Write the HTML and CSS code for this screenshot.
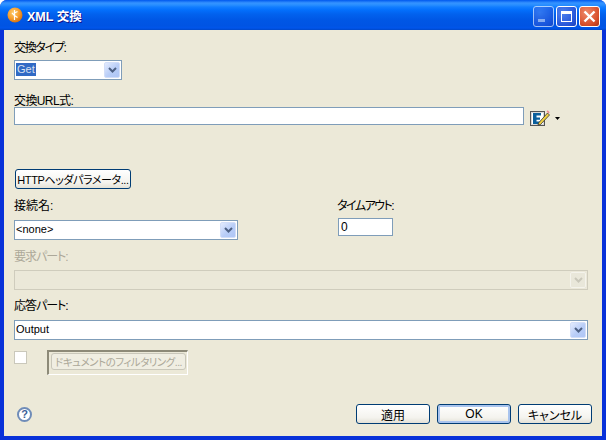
FILE: index.html
```html
<!DOCTYPE html>
<html lang="ja">
<head>
<meta charset="utf-8">
<title>XML 交換</title>
<link rel="stylesheet" href="styles.css">
</head>
<body>
<div class="window">
  <div class="titlebar">
    <svg class="app-icon" width="16" height="16" viewBox="0 0 16 16">
      <defs><radialGradient id="g" cx="0.4" cy="0.35" r="0.7"><stop offset="0" stop-color="#ffd070"/><stop offset="0.6" stop-color="#f59a28"/><stop offset="1" stop-color="#d06c10"/></radialGradient></defs>
      <circle cx="8" cy="8" r="7.500" fill="url(#g)"/>
      <path d="M7.500 3v10M7.500 6l3-1.500M7.500 8.500l3 2M5 6l2.500 2.500" stroke="#fff" stroke-width="1.200" fill="none"/>
    </svg>
    <span class="title">XML 交換</span>
    <div class="controls">
      <div class="ctl ctl-min"><span class="min-glyph"></span></div>
      <div class="ctl ctl-max"><span class="max-glyph"></span></div>
      <div class="ctl ctl-close">
        <svg width="13" height="13" viewBox="0 0 13 13"><path d="M1.500 1.500l10 10M11.500 1.500l-10 10" stroke="#fff" stroke-width="2.400" fill="none"/></svg>
      </div>
    </div>
  </div>
  <div class="body">
    <div class="label tight-more">交換タイプ:</div>
    <div class="combo combo-type">
      <div class="combo-text"><span class="selected">Get</span></div>
      <div class="arrow"><svg width="9" height="7" viewBox="0 0 9 7"><path d="M1 1l3.500 3.500L8 1" stroke="#4d6185" stroke-width="2" fill="none"/></svg></div>
    </div>
    <div class="label l-url tight-less">交換URL式:</div>
    <div class="url-row">
      <input class="field url-field" type="text" value="">
      <svg class="edit-icon" width="20" height="18" viewBox="0 0 20 18">
        <rect x="0.500" y="3.500" width="14" height="14" fill="#d8d8d8" stroke="#555"/>
        <rect x="2" y="5" width="11" height="11" fill="#fff"/>
        <path d="M3 5h8v2.500H6.500v2h3.500v2.200H6.500v1.800H11V16H3z" fill="#0a5f9c"/>
        <path d="M8.500 15l9-10 2 2-9 9.500-2.500 .5z" fill="#f0d040" stroke="#333" stroke-width="0.800"/>
        <path d="M16.500 3.500l1.200-1.300 2 2-1.200 1.300z" fill="#f08a90"/>
      </svg>
      <svg class="drop" width="5" height="3" viewBox="0 0 5 3"><path d="M0 0h5L2.500 3z" fill="#000"/></svg>
    </div>
    <button class="btn btn-http" type="button">HTTPヘッダパラメータ...</button>
    <div class="two-col">
      <div class="col-left">
        <div class="label">接続名:</div>
        <div class="combo combo-conn">
          <div class="combo-text">&lt;none&gt;</div>
          <div class="arrow"><svg width="9" height="7" viewBox="0 0 9 7"><path d="M1 1l3.500 3.500L8 1" stroke="#4d6185" stroke-width="2" fill="none"/></svg></div>
        </div>
      </div>
      <div class="col-right">
        <div class="label label-timeout">タイムアウト:</div>
        <input class="field timeout-field" type="text" value="0">
      </div>
    </div>
    <div class="label label-disabled l-req tight">要求パート:</div>
    <div class="combo combo-disabled">
      <div class="combo-text"></div>
      <div class="arrow arrow-disabled"><svg width="9" height="7" viewBox="0 0 9 7"><path d="M1 1l3.500 3.500L8 1" stroke="#c9c7ba" stroke-width="2" fill="none"/></svg></div>
    </div>
    <div class="label l-res tight">応答パート:</div>
    <div class="combo combo-res">
      <div class="combo-text">Output</div>
      <div class="arrow"><svg width="9" height="7" viewBox="0 0 9 7"><path d="M1 1l3.500 3.500L8 1" stroke="#4d6185" stroke-width="2" fill="none"/></svg></div>
    </div>
    <div class="filter-row">
      <span class="check"></span>
      <div class="filter-frame"><button class="btn-disabled" type="button">ドキュメントのフィルタリング...</button></div>
    </div>
    <div class="footer">
      <span class="help">?</span>
      <div class="actions">
        <button class="btn btn-action" type="button">適用</button>
        <button class="btn btn-action btn-default" type="button">OK</button>
        <button class="btn btn-action" type="button">キャンセル</button>
      </div>
    </div>
  </div>
</div>
</body>
</html>
```

FILE: styles.css
```css
* { box-sizing: border-box; }
html, body { margin: 0; padding: 0; background: #fff; }
body {
  width: 606px;
  height: 440px;
  overflow: hidden;
  font-family: "Liberation Sans", "Noto Sans CJK JP", sans-serif;
  font-size: 12px;
  font-feature-settings: "palt";
  color: #000;
}
.window {
  width: 606px;
  height: 440px;
  display: flex;
  flex-direction: column;
  border-radius: 7px 7px 0 0;
  overflow: hidden;
  background: #0831d9;
}
.titlebar {
  height: 30px;
  flex: none;
  display: flex;
  align-items: center;
  padding: 0 6px 0 7px;
  background: linear-gradient(#0058ee 0, #3593ff 3px, #288eff 5px, #127dff 7px, #036ffc 10px, #0262ee 14px, #0057e5 20px, #0054e3 26px, #0055eb 28px, #0048c8 30px);
}
.app-icon { flex: none; margin-top: -1px; }
.title {
  margin-left: 4px;
  color: #fff;
  font-family: "Liberation Sans", "Noto Sans CJK JP", sans-serif;
  font-weight: bold;
  font-size: 12.500px;
  font-feature-settings: normal;
  text-shadow: 1px 1px 0 #0f1089;
}
.controls { margin-left: auto; display: flex; gap: 2px; margin-top: 3px; }
.ctl {
  width: 21px;
  height: 21px;
  border: 1px solid #fff;
  border-radius: 3px;
  display: flex;
  align-items: center;
  justify-content: center;
  background: radial-gradient(circle at 30% 30%, #4f82ee, #2655d8 70%, #1b3fb8);
}
.ctl-min { opacity: 0.62; }
.min-glyph { width: 7px; height: 3px; background: #fff; margin: 8px 0 0 -5px; opacity: .8; }
.max-glyph { width: 11px; height: 11px; border: 1px solid #fff; border-top-width: 3px; }
.ctl-close { background: radial-gradient(circle at 35% 30%, #ee8a6c, #d9502c 65%, #b03414); }

.body {
  flex: 1;
  min-height: 0;
  margin: 0 4px 4px;
  padding: 10px 14px 12px 10px;
  background: #ece9d8;
  display: flex;
  flex-direction: column;
  align-items: flex-start;
}
.label { height: 14px; line-height: 16px; font-size: 12px; white-space: nowrap; }
.label-disabled { color: #aca899; }
.tight { letter-spacing: -1px; }
.tight-more { letter-spacing: -1.300px; }
.tight-less { letter-spacing: -0.600px; }
.l-url { margin-top: 13px; }
.l-req { margin-top: 9px; }
.l-res { margin-top: 8px; }

.combo {
  height: 20px;
  display: flex;
  align-items: center;
  background: #fff;
  border: 1px solid #7f9db9;
  margin-top: 6px;
  padding-right: 1px;
}
.combo-type { width: 108px; }
.combo-conn { width: 224px; margin-top: 8px; }
.combo-disabled { width: 574px; margin-top: 7px; background: #ebe8d9; border-color: #cfccbd; }
.combo-res { width: 574px; margin-top: 8px; }
.combo-text { flex: 1; padding-left: 1px; font-size: 11px; line-height: 14px; height: 16px; }
.selected { background: #316ac5; color: #d8e0f0; display: inline-block; padding: 0 1px; height: 13px; line-height: 13px; }
.arrow {
  flex: none;
  width: 16px;
  height: 16px;
  border-radius: 2px;
  display: flex;
  align-items: center;
  justify-content: center;
  background: linear-gradient(135deg, #e3ebfe, #b8cdf7 55%, #aec6f6);
  border: 1px solid #d2def8;
}
.arrow-disabled { background: #e9e7da; border-color: #f4f3ec; }

.url-row { display: flex; align-items: flex-start; height: 18px; }
.field {
  height: 18px;
  border: 1px solid #7f9db9;
  background: #fff;
  padding: 0 2px;
  margin: 0;
  font-family: "Liberation Sans", sans-serif;
  font-size: 12px;
  outline: none;
}
.url-field { width: 510px; }
.edit-icon { margin-left: 6px; margin-top: 1px; flex: none; }
.drop { margin-left: 5px; margin-top: 10px; flex: none; }

.btn {
  height: 20px;
  padding: 0;
  border: 1px solid #003c74;
  border-radius: 3px;
  background: linear-gradient(#fff, #f4f3ee 70%, #e3e1d6);
  font-family: "Liberation Sans", "Noto Sans CJK JP", sans-serif;
  font-size: 12px;
  font-feature-settings: "palt";
  color: #000;
  white-space: nowrap;
}
.btn-http { width: 116px; margin: 44px 0 0 1px; font-size: 11px; letter-spacing: -0.400px; }

.two-col { display: flex; margin-top: 9px; width: 574px; }
.col-left { width: 224px; }
.col-right { margin-left: 100px; }
.label-timeout { margin-left: -1px; letter-spacing: -1.500px; }
.timeout-field { display: block; width: 55px; margin-top: 6px; }

.filter-row { display: flex; align-items: flex-start; margin-top: 10px; }
.check { width: 13px; height: 13px; background: #fff; border: 1px solid #cac8bb; margin-top: 1px; }
.filter-frame {
  margin-left: 20px;
  width: 141px;
  height: 25px;
  padding: 1px 0 0 2px;
  border: 1px solid #fff;
  border-width: 0 1px 1px 0;
  border-top: 2px solid #8d8a78;
  border-left: 2px solid #8d8a78;
  background: #ece9d8;
}
.btn-disabled {
  display: block;
  width: 135px;
  height: 17px;
  padding: 0;
  border: 1px solid #c9c7ba;
  border-radius: 3px;
  background: #f0eee2;
  color: #aca899;
  font-family: "Liberation Sans", "Noto Sans CJK JP", sans-serif;
  font-size: 10.500px;
  letter-spacing: -0.500px;
  font-feature-settings: "palt";
  white-space: nowrap;
}

.footer { margin-top: auto; width: 578px; display: flex; align-items: center; justify-content: space-between; padding-left: 3px; }
.help {
  width: 15px;
  height: 15px;
  border: 2px solid #6f8cb8;
  border-radius: 50%;
  background: #fff;
  color: #3c5f98;
  font: bold 11px/11px "Liberation Sans", sans-serif;
  text-align: center;
}
.actions { display: flex; gap: 7px; }
.btn-action { width: 74px; }
.btn-default { box-shadow: inset 0 0 0 2px #a9c4ee; }
```
